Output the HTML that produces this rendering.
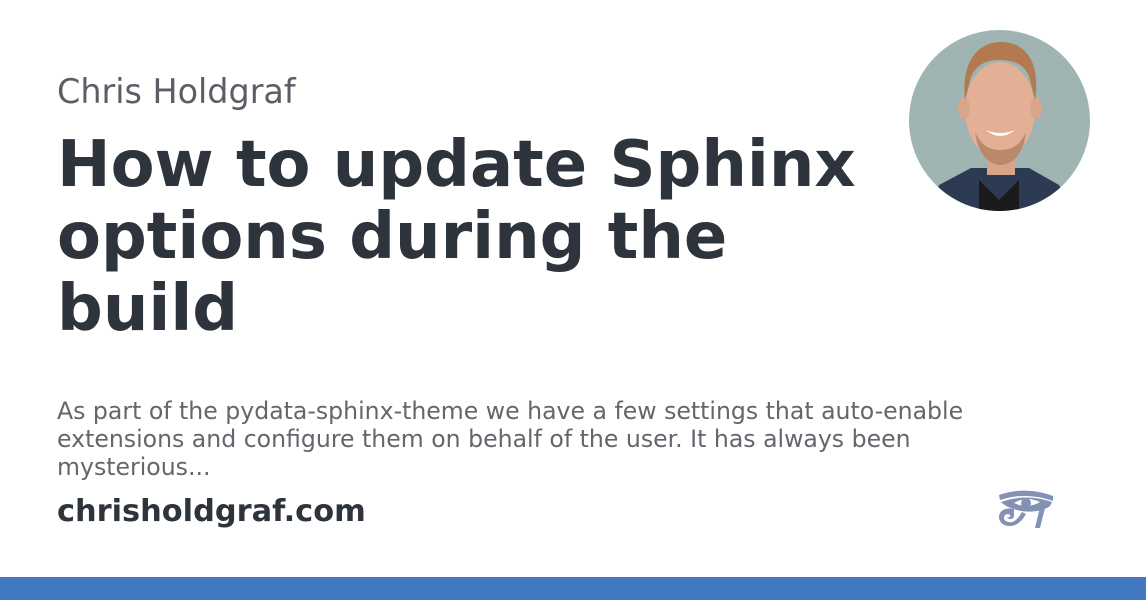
<!DOCTYPE html>
<html><head><style>
body{margin:0;width:1146px;height:600px;background:#fff;position:relative;overflow:hidden;font-family:"DejaVu Sans","Liberation Sans",sans-serif}
.a{position:absolute;left:57px;top:72px;font-size:33.4px;color:#5b5f65;line-height:40px}
.t{position:absolute;left:57px;top:129px;font-size:64px;font-weight:bold;color:#2e343b;line-height:72px;width:860px}
.d{position:absolute;left:57px;top:397px;font-size:23.6px;color:#63676c;line-height:28px;width:940px}
.s{position:absolute;left:57px;top:494px;font-size:30.4px;font-weight:bold;color:#2e343b;line-height:36px}
.bar{position:absolute;left:0;top:577px;width:1146px;height:23px;background:#4278c0}
</style></head><body>
<div class="a">Chris Holdgraf</div>
<div class="t">How to update Sphinx options during the build</div>
<div class="d">As part of the pydata-sphinx-theme we have a few settings that auto-enable extensions and configure them on behalf of the user. It has always been mysterious...</div>
<div class="s">chrisholdgraf.com</div>
<svg style="position:absolute;left:909px;top:30px" width="181" height="181" viewBox="0 0 181 181">
<defs><clipPath id="c"><circle cx="90.5" cy="90.5" r="90.5"/></clipPath></defs>
<g clip-path="url(#c)">
<rect width="181" height="181" fill="#a0b4b4"/>
<path d="M20 181 L30 155 L62 138 L120 138 L150 155 L165 181Z" fill="#2d3b52"/>
<path d="M70 150 L90 170 L110 150 L110 181 L70 181Z" fill="#1a1a1a"/>
<rect x="78" y="100" width="28" height="45" fill="#d9a58a"/>
<ellipse cx="91" cy="80" rx="35" ry="48" fill="#e3b096"/>
<ellipse cx="55" cy="78" rx="6" ry="11" fill="#d9a58a"/>
<ellipse cx="127" cy="78" rx="6" ry="11" fill="#d9a58a"/>
<path d="M56 70 C52 30 70 12 92 12 C115 12 132 30 126 70 L121 50 C118 35 105 30 90 30 C72 30 62 40 60 55Z" fill="#b27a4e"/>
<path d="M66 102 C70 130 85 135 91 135 C100 135 114 128 117 102 C110 118 100 120 91 120 C80 120 72 115 66 102Z" fill="#b98a6a"/>
<path d="M77 100 Q91 112 106 100 Q91 106 77 100Z" fill="#fff"/>
</g></svg>
<svg style="position:absolute;left:997px;top:490px" width="58" height="40" viewBox="0 0 58 40">
<g fill="#8391b4">
<path d="M2 5 C18 -1 38 -1 56 6 L56 11 C40 5 20 4 3 10Z"/>
<path d="M4 12 C20 6 38 6 55 12 L53 16 C45 22 30 23 20 20 C12 18 7 15 4 12Z M17 13 C25 17 35 17 43 12 C35 8 25 8 17 13Z"/>
<circle cx="29" cy="13" r="5"/>
<path d="M17 19 C8 17 2 21 2 27 C2 34 10 38 18 35 C23 33 26 29 29 24 L25 22 C22 27 19 31 15 32 C10 33 6 30 7 27 C8 24 11 23 13 25 C14 27 12 28 10 27 C12 31 18 29 17 24Z"/>
<path d="M43 17 L48 18 L43 38 L38 38Z"/>
</g></svg>
<div class="bar"></div>
</body></html>
